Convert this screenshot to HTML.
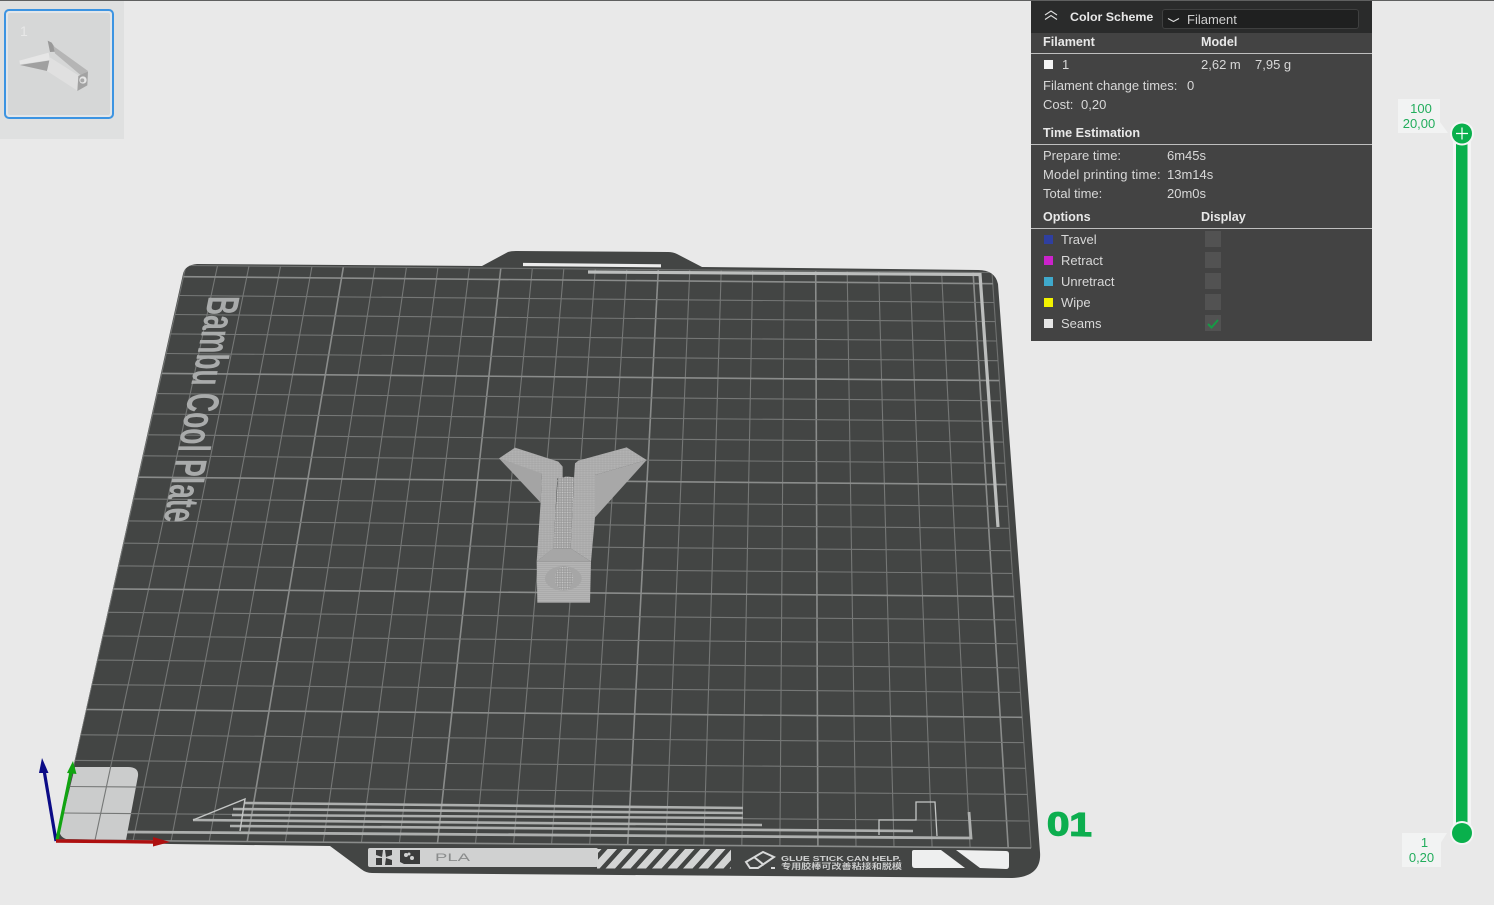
<!DOCTYPE html>
<html>
<head>
<meta charset="utf-8">
<style>
html,body{margin:0;padding:0;width:1494px;height:905px;overflow:hidden;background:#e9e9e9;font-family:"Liberation Sans","Noto Sans CJK SC",sans-serif}
svg{position:absolute;left:0;top:0}
#panel{position:absolute;left:1031px;top:1px;width:341px;height:340px;background:#434343;color:#d8d8d8;font-size:13px}
#head{position:absolute;left:0;top:0;width:341px;height:32px;background:#2a2b2b}
#combo{position:absolute;left:131px;top:8px;width:197px;height:20px;background:#1f2020;border-radius:3px;box-shadow:inset 0 0 0 1px #3f4040}
#panel span{position:absolute;white-space:nowrap;line-height:16px;margin-top:1px}
#panel b{position:absolute;white-space:nowrap;line-height:16px;color:#e8e8e8;margin-top:1px;font-size:12.6px}
.ln{position:absolute;left:0;width:341px;height:1px;background:#bfbfbf}
.sw{position:absolute;left:13px;width:9px;height:9px}
.cb{position:absolute;left:174px;width:16px;height:16px;background:#525252}
.lab{position:absolute;background:#f2f3f3;color:#22ad5c;font-size:13px;line-height:15px;text-align:center}
</style>
</head>
<body>
<svg width="1494" height="905" viewBox="0 0 1494 905" xmlns="http://www.w3.org/2000/svg">
<defs>
<pattern id="mesh" width="5" height="5" patternUnits="userSpaceOnUse"><rect width="5" height="5" fill="#969696"/><circle cx="2.500" cy="2.500" r="1.600" fill="#d0d0d0"/></pattern>
<pattern id="scale" width="9" height="7" patternUnits="userSpaceOnUse"><rect width="9" height="7" fill="#b2b2b2"/><path d="M0 6.500H9M3 0V6" stroke="#9c9c9c" stroke-width="1.100"/></pattern>
<pattern id="hl" width="6" height="6" patternUnits="userSpaceOnUse"><rect width="6" height="6" fill="#b4b4b4"/><path d="M0 5H6" stroke="#a2a2a2" stroke-width="1.500"/></pattern>
<pattern id="hatch" x="597" y="849" width="15.500" height="19.500" patternUnits="userSpaceOnUse" patternTransform="skewX(-42)"><rect x="0" y="0" width="9.500" height="19.500" fill="#d3d4d4"/></pattern>
<clipPath id="pl"><path d="M57 840 L183 274 Q185 265 197 264 L482 266 L508 252 Q511 251 516 251 L668 252 Q673 252 677 254 L702 267 L978 270 Q995 270 998 284 L1040 852 Q1042 877 1012 878 L372 873 Q366 873 361 869 L330 846 L170 844 Z"/></clipPath>
</defs>

<rect x="0" y="0" width="1494" height="1" fill="#5f6060"/>

<!-- thumbnail -->
<rect x="0" y="1" width="124" height="138" fill="#dfe0e0"/>
<rect x="5" y="10" width="108" height="108" rx="4" fill="#d6d7d7" stroke="#3c94e2" stroke-width="2"/>
<rect x="7" y="12" width="104" height="104" rx="3" fill="none" stroke="#e2e6ea" stroke-width="2"/>
<text x="20" y="36" font-size="14" fill="#e8e8e8" font-family="Liberation Sans">1</text>
<g transform="scale(0.3333)">
<polygon points="143,122 155,128 172,155 150,156" fill="#999999"/>
<polygon points="160,138 264,213 243,226 165,160" fill="#b5b5b5"/>
<polygon points="58,182 146,158 150,180 60,193" fill="#e6e6e6"/>
<polygon points="60,195 150,181 141,213" fill="#a0a0a0"/>
<polygon points="150,172 238,228 232,272 141,213" fill="#e0e0e0"/>
<polygon points="235,228 264,214 262,256 232,273" fill="#a2a2a2"/>
<circle cx="249" cy="240" r="11" fill="#e6e6e6"/>
<circle cx="247" cy="241" r="6" fill="#a8a8a8"/>
</g>

<!-- plate -->
<path d="M57 840 L183 274 Q185 265 197 264 L482 266 L508 252 Q511 251 516 251 L668 252 Q673 252 677 254 L702 267 L978 270 Q995 270 998 284 L1040 852 Q1042 877 1012 878 L372 873 Q366 873 361 869 L330 846 L170 844 Z" fill="#434544"/>
<path d="M75 767 L128 767 Q139 767 138 776 L126 840 L66 839 Q58 836 60 828 Z" fill="#cbcccc"/>
<g id="grid" fill="none" clip-path="url(#pl)"></g>

<!-- purge/skirt lines -->
<g fill="none" stroke="#adafae" stroke-linecap="butt">
<path d="M588 272 L980 274.500 L998 527" stroke="#bcbebd" stroke-width="3.200"/>
<path d="M523 264.500 L661 265.800" stroke="#ececec" stroke-width="3.200"/>
<path d="M245 803 L743 808" stroke-width="2.600"/>
<path d="M233 809 L743 813" stroke-width="2.600"/>
<path d="M232 815 L743 818" stroke-width="2.600"/>
<path d="M193 820 L762 825" stroke-width="2.600"/>
<path d="M230 826 L913 831" stroke-width="2.600"/>
<path d="M127 832 L971 838 L969 812" stroke-width="2.800"/>
<path d="M193 820 L245 799 L240 831" stroke="#c4c6c5" stroke-width="1.400"/>
<path d="M879 835 L879 820 L916 820 L916 802 L935 802 L937 836" stroke="#c4c6c5" stroke-width="1.300"/>
</g>

<!-- plate text -->
<text transform="matrix(-0.197,0.98,-1,0,209,296)" x="0" y="0" font-size="45" font-weight="bold" textLength="231" lengthAdjust="spacingAndGlyphs" fill="#a9abab" font-family="Liberation Sans">Bambu Cool Plate</text>

<!-- bottom strip -->
<rect x="368" y="848" width="230" height="19" rx="2" fill="#d0d1d1"/>
<rect x="597" y="849" width="134" height="19.500" fill="url(#hatch)"/>
<g fill="#3b3c3c">
<path d="M376 850H383L382 857L376 855Z"/><path d="M385 850H392V855L386 857Z"/><path d="M376 858L382 858L382 865H376Z"/><path d="M386 858L392 860V865H385Z"/>
<path d="M400 850H420V864H404L400 862Z"/>
</g>
<g fill="#d0d1d1"><circle cx="406" cy="855" r="2"/><circle cx="412" cy="858" r="2"/><circle cx="409" cy="854" r="1.500"/></g>
<text x="435" y="861" font-size="11" textLength="35" lengthAdjust="spacingAndGlyphs" fill="#8a8c8c" font-family="Liberation Sans">PLA</text>

<g fill="none" stroke="#d8d9d9" stroke-width="2">
<path d="M746 862 L763 852 L774 857 L758 868 L750 868 Z"/>
<path d="M754 857 L764 865"/>
<path d="M771 868 L775 868"/>
</g>
<text x="781" y="861" font-size="7.500" font-weight="bold" textLength="120" lengthAdjust="spacingAndGlyphs" fill="#cfd0d0" font-family="Liberation Sans">GLUE STICK CAN HELP.</text>
<text x="781" y="869" font-size="7.800" font-weight="bold" textLength="121" lengthAdjust="spacingAndGlyphs" fill="#c9caca" font-family="Noto Sans CJK SC">专用胶棒可改善粘接和脱模</text>
<path d="M914 850 L941 850 L965 868 L915 868 Q912 868 912 865 L912 852 Q912 850 914 850Z" fill="#eeefef"/>
<path d="M956 850 L1006 851 Q1009 851 1009 854 L1009 866 Q1009 869 1006 869 L980 868 Z" fill="#eeefef"/>

<!-- 01 -->
<text transform="matrix(1.220,0.030,0,1,1047,835)" x="0" y="0" font-size="33" font-weight="bold" fill="#0dae4f" stroke="#0dae4f" stroke-width="1.300" font-family="Liberation Sans">01</text>

<!-- model -->
<g transform="translate(480,430) scale(0.33333)">
<polygon points="345,135 500,90 345,262" fill="#a8a8a8"/>
<polygon points="57,85 182,218 186,128" fill="#a4a4a4"/>
<polygon points="57,85 105,53 235,95 248,110 248,142 232,145 220,355 170,395 182,215 186,130" fill="url(#scale)"/>
<polygon points="285,100 295,92 440,52 500,90 345,135 345,262 333,395 272,355 282,145" fill="url(#scale)"/>
<polygon points="234,142 252,142 255,140 266,140 282,142 272,355 219,355" fill="url(#mesh)"/>
<polygon points="219,355 272,355 333,395 170,395" fill="#a6a6a6"/>
<polygon points="170,395 333,395 330,518 172,518" fill="url(#hl)"/>
<ellipse cx="250" cy="445" rx="55" ry="37" fill="#a6a6a6"/>
<ellipse cx="252" cy="445" rx="27" ry="36" fill="url(#mesh)"/>
</g>

<!-- axes -->
<g>
<path d="M56 841 L44 770" stroke="#0b0b86" stroke-width="3.200" fill="none"/>
<polygon points="42,758 48.500,773 39,773" fill="#0b0b86"/>
<path d="M57 840 L71 772" stroke="#11a411" stroke-width="3.200" fill="none"/>
<polygon points="73,761 76.500,774 67,773" fill="#11a411"/>
<path d="M56 841 L155 842" stroke="#ae1010" stroke-width="3.400" fill="none"/>
<polygon points="170,842 153,846.500 153,837" fill="#ae1010"/>
</g>

<!-- slider -->
<rect x="1453" y="134" width="18" height="700" fill="#f4f5f5"/>
<rect x="1456" y="134" width="11.500" height="700" fill="#09b04c"/>
<circle cx="1462" cy="133.500" r="12" fill="#f4f5f5"/>
<circle cx="1462" cy="133.500" r="10" fill="#09b04c"/>
<path d="M1456 133.500H1468M1462 127.500V139.500" stroke="#ffffff" stroke-width="1.200"/>
<circle cx="1462" cy="833" r="12" fill="#f4f5f5"/>
<circle cx="1462" cy="833" r="10" fill="#09b04c"/>
<polygon points="1440,122 1448,133 1438,133" fill="#f2f3f3"/>
<polygon points="1440,844 1447,833 1438,833" fill="#f2f3f3"/>
</svg>

<div class="lab" style="left:1398px;top:99px;width:42px;height:34px;padding-top:2px;box-sizing:border-box"><div style="margin-left:4px">100</div><div>20,00</div></div>
<div class="lab" style="left:1402px;top:833px;width:39px;height:34px;padding-top:2px;box-sizing:border-box"><div style="margin-left:6px">1</div><div>0,20</div></div>

<div id="panel">
<div id="head"></div>
<div id="combo"></div>
<svg width="341" height="40" style="left:0;top:0">
<path d="M14 14 L20 10 L26 14 M14 18.500 L20 14.500 L26 18.500" fill="none" stroke="#e0e0e0" stroke-width="1.100"/>
<path d="M137 17.500 L142.500 20.500 L148 17.500" fill="none" stroke="#e0e0e0" stroke-width="1.100"/>
</svg>
<b style="left:39px;top:7px;font-size:12.400px">Color Scheme</b>
<span style="left:156px;top:10px;color:#cfcfcf">Filament</span>

<b style="left:12px;top:32px">Filament</b><b style="left:170px;top:32px">Model</b>
<div class="ln" style="top:52px"></div>
<div class="sw" style="top:59px;background:#f4f4f4"></div>
<span style="left:31px;top:55px">1</span>
<span style="left:170px;top:55px">2,62 m</span><span style="left:224px;top:55px">7,95 g</span>
<span style="left:12px;top:76px">Filament change times:</span><span style="left:156px;top:76px">0</span>
<span style="left:12px;top:95px">Cost:</span><span style="left:50px;top:95px">0,20</span>

<b style="left:12px;top:123px">Time Estimation</b>
<div class="ln" style="top:143px"></div>
<span style="left:12px;top:146px">Prepare time:</span><span style="left:136px;top:146px">6m45s</span>
<span style="left:12px;top:165px;letter-spacing:.22px">Model printing time:</span><span style="left:136px;top:165px">13m14s</span>
<span style="left:12px;top:184px">Total time:</span><span style="left:136px;top:184px">20m0s</span>

<b style="left:12px;top:207px">Options</b><b style="left:170px;top:207px">Display</b>
<div class="ln" style="top:227px"></div>

<div class="sw" style="top:234px;background:#2f3fa0"></div><span style="left:30px;top:230px">Travel</span><div class="cb" style="top:230px"></div>
<div class="sw" style="top:255px;background:#cc22cc"></div><span style="left:30px;top:251px">Retract</span><div class="cb" style="top:251px"></div>
<div class="sw" style="top:276px;background:#3fa9cc"></div><span style="left:30px;top:272px">Unretract</span><div class="cb" style="top:272px"></div>
<div class="sw" style="top:297px;background:#f2f200"></div><span style="left:30px;top:293px">Wipe</span><div class="cb" style="top:293px"></div>
<div class="sw" style="top:318px;background:#e6e6e6"></div><span style="left:30px;top:314px">Seams</span><div class="cb" style="top:314px"></div>
<svg width="341" height="340" style="left:0;top:0;pointer-events:none">
<path d="M177 323 L180.500 326.500 L187 319" fill="none" stroke="#169a45" stroke-width="2"/>
</svg>
</div>

<script>
(function(){
var g=document.getElementById('grid'),h='';
var TL=[186,265.5],TR=[992,272.5],BL=[57,840],BR=[1031,848];
var n=25.6,c=0.211;
function S(v){var t=v/n;return t*(1+c)/(1+c*t);}
function lerp(a,b,t){return [a[0]+(b[0]-a[0])*t,a[1]+(b[1]-a[1])*t];}
function line(a,b,maj,edge){h+='<line x1="'+a[0].toFixed(1)+'" y1="'+a[1].toFixed(1)+'" x2="'+b[0].toFixed(1)+'" y2="'+b[1].toFixed(1)+'" stroke="'+(edge?'#6f7170':(maj?'#8a8c8b':'#757776'))+'" stroke-width="'+(maj?1.6:1.1)+'"/>';}
for(var k=0;k<=26;k++){var u=k>25?n:k;var t=u/n;line(lerp(TL,TR,t),lerp(BL,BR,t),k%5==0&&k<26&&k>0,k==0||k==26);}
for(var v=0;v<=26;v++){var w=v>25?n:v;var s=S(w);line(lerp(BL,TL,s),lerp(BR,TR,s),v%5==0&&v<26,v==26);}
g.innerHTML=h;
})();
</script>
</body>
</html>
